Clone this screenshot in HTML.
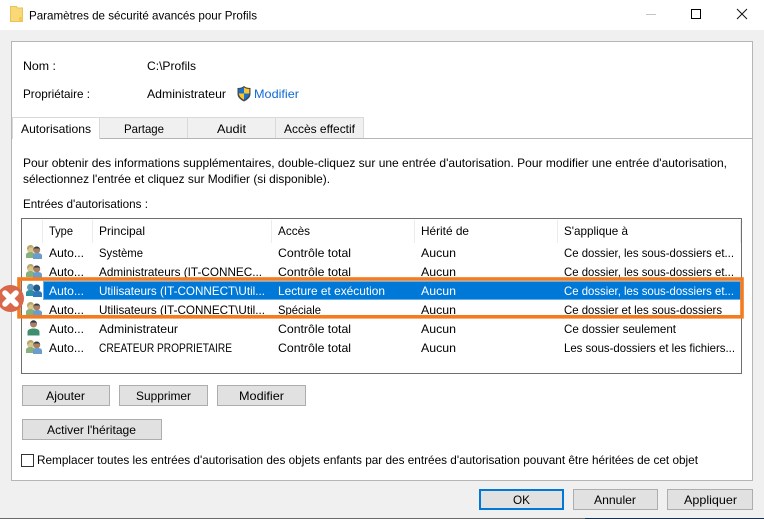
<!DOCTYPE html>
<html lang="fr">
<head>
<meta charset="utf-8">
<title>Paramètres de sécurité avancés pour Profils</title>
<style>
html,body{margin:0;padding:0;background:#f0f0f0;width:764px;height:519px;overflow:hidden}
svg{display:block;position:absolute;left:0;top:0}
text{font-family:"Liberation Sans",sans-serif;font-size:12px;fill:#000;white-space:pre}
.w{fill:#fff}
.l{fill:#0f6bd4}
.b{fill:#e1e1e1;stroke:#adadad;stroke-width:1}
.s{stroke:#ececec;stroke-width:1;fill:none}
</style>
</head>
<body>
<svg width="764" height="519" viewBox="0 0 764 519" xmlns="http://www.w3.org/2000/svg">
<defs>
<g id="grp">
  <circle cx="4.500" cy="4.300" r="3.500" fill="#d9c48c"/>
  <path d="M1 4a3.500 3.500 0 0 1 7 -1l-1.500 -.5h-3l-1 2z" fill="#b9a768"/>
  <path d="M0 13v-3c0-2 2-3 4.500-3s4.500 1 4.500 3v3z" fill="#88b07c"/>
  <circle cx="10.700" cy="5" r="3.500" fill="#a98060"/>
  <path d="M7.200 5a3.500 3.500 0 0 1 7 0l-1-1.500h-5z" fill="#2f3a48"/>
  <path d="M7 14v-3c0-2 1.500-3 4.500-3s4.500 1 4.500 3v3z" fill="#6a9ccc"/>
</g>
<g id="grps">
  <circle cx="4.500" cy="4.300" r="3.500" fill="#5b9bb8"/>
  <path d="M0 13v-3c0-2 2-3 4.500-3s4.500 1 4.500 3v3z" fill="#2f8fa0"/>
  <circle cx="10.700" cy="5" r="3.500" fill="#23588c"/>
  <path d="M7 14v-3c0-2 1.500-3 4.500-3s4.500 1 4.500 3v3z" fill="#2f78c0"/>
</g>
<g id="usr">
  <circle cx="6.500" cy="4" r="3.500" fill="#a98060"/>
  <path d="M3 3.800a3.500 3.500 0 0 1 7 0l-1-1.200h-5z" fill="#2f3a48"/>
  <path d="M0.500 15.500v-3.500c0-2.500 2.500-3.500 6-3.500s6 1 6 3.500v3.500z" fill="#3f8f6e"/>
</g>
</defs>

<!-- title bar -->
<rect x="0" y="0" width="764" height="30" fill="#fff"/>
<path d="M10.500 6.500h6l1 1.500h5v13.500h-12z" fill="#f8d976" stroke="#e8c35c"/>
<rect x="19" y="17" width="4" height="4" fill="#f3c94f"/>
<text x="29" y="19.500" textLength="228" lengthAdjust="spacingAndGlyphs">Paramètres de sécurité avancés pour Profils</text>
<rect x="646" y="14" width="10" height="1" fill="#c4c4c4"/>
<rect x="691.500" y="9.500" width="9" height="9" fill="none" stroke="#000"/>
<path d="M737 9l10 10M747 9l-10 10" stroke="#111" stroke-width="1" fill="none"/>

<!-- main panel -->
<rect x="11.500" y="41.500" width="741" height="439" fill="#fff" stroke="#b5b5b5"/>

<text x="23" y="70" textLength="33" lengthAdjust="spacingAndGlyphs">Nom :</text>
<text x="147" y="70" textLength="49" lengthAdjust="spacingAndGlyphs">C:\Profils</text>
<text x="23" y="98" textLength="67" lengthAdjust="spacingAndGlyphs">Propriétaire :</text>
<text x="147" y="98" textLength="79" lengthAdjust="spacingAndGlyphs">Administrateur</text>
<!-- shield -->
<path d="M244 86c2 1.500 4 2 6.500 2v6c0 3.500-3 5.800-6.500 7.500c-3.500-1.700-6.500-4-6.500-7.500v-6c2.500 0 4.500-.5 6.500-2z" fill="#44494f"/>
<path d="M244 87.500v6h-5.300v-4.500c2 0 3.700-.5 5.300-1.500z" fill="#1c6fc9"/>
<path d="M244 87.500c1.600 1 3.300 1.500 5.300 1.500v4.500h-5.300z" fill="#f7c52e"/>
<path d="M238.800 93.500h5.200v6.300c-2.500-1.300-4.800-3.200-5.200-6.300z" fill="#f7c52e"/>
<path d="M244 93.500h5.200c-.4 3.100-2.700 5-5.200 6.300z" fill="#1c6fc9"/>
<text class="l" x="254" y="98" textLength="45" lengthAdjust="spacingAndGlyphs">Modifier</text>

<!-- tabs -->
<rect x="99.500" y="117.500" width="88" height="21" fill="#f0f0f0" stroke="#d9d9d9"/>
<rect x="187.500" y="117.500" width="88" height="21" fill="#f0f0f0" stroke="#d9d9d9"/>
<rect x="275.500" y="117.500" width="88" height="21" fill="#f0f0f0" stroke="#d9d9d9"/>
<path d="M99 138.500H753" stroke="#b5b5b5" fill="none"/>
<path d="M12.500 139V117.500H99.500V139" fill="#fff" stroke="#d9d9d9"/>
<text x="21" y="133" textLength="70" lengthAdjust="spacingAndGlyphs">Autorisations</text>
<text x="124" y="133" textLength="40" lengthAdjust="spacingAndGlyphs">Partage</text>
<text x="217" y="133" textLength="29" lengthAdjust="spacingAndGlyphs">Audit</text>
<text x="284" y="133" textLength="71" lengthAdjust="spacingAndGlyphs">Accès effectif</text>

<!-- description -->
<text x="23" y="167" textLength="704" lengthAdjust="spacingAndGlyphs">Pour obtenir des informations supplémentaires, double-cliquez sur une entrée d'autorisation. Pour modifier une entrée d'autorisation,</text>
<text x="23" y="183" textLength="307" lengthAdjust="spacingAndGlyphs">sélectionnez l'entrée et cliquez sur Modifier (si disponible).</text>
<text x="23" y="208" textLength="125" lengthAdjust="spacingAndGlyphs">Entrées d'autorisations :</text>

<!-- list -->
<rect x="21.500" y="218.500" width="720" height="155" fill="#fff" stroke="#6e6e6e"/>
<path class="s" d="M42.500 220V243M92.500 220V243M271.500 220V243M414.500 220V243M557.500 220V243M740.500 220V243"/>
<text x="49" y="235" textLength="24" lengthAdjust="spacingAndGlyphs">Type</text>
<text x="99" y="235" textLength="46" lengthAdjust="spacingAndGlyphs">Principal</text>
<text x="278" y="235" textLength="32" lengthAdjust="spacingAndGlyphs">Accès</text>
<text x="421" y="235" textLength="48" lengthAdjust="spacingAndGlyphs">Hérité de</text>
<text x="564" y="235" textLength="64" lengthAdjust="spacingAndGlyphs">S'applique à</text>

<!-- selection -->
<rect x="43" y="281" width="698" height="19" fill="#0078d7"/>
<rect x="43.500" y="281.500" width="697" height="18" fill="none" stroke="#cfe4f7" stroke-dasharray="1 1"/>

<!-- icons -->
<use href="#grp" x="26" y="245"/>
<use href="#grp" x="26" y="264"/>
<use href="#grps" x="26" y="283"/>
<use href="#grp" x="26" y="302"/>
<use href="#usr" x="27" y="320"/>
<use href="#grp" x="26" y="340"/>

<!-- row 1 -->
<text x="49" y="257" textLength="35" lengthAdjust="spacingAndGlyphs">Auto...</text>
<text x="99" y="257" textLength="44" lengthAdjust="spacingAndGlyphs">Système</text>
<text x="278" y="257" textLength="73" lengthAdjust="spacingAndGlyphs">Contrôle total</text>
<text x="421" y="257" textLength="35" lengthAdjust="spacingAndGlyphs">Aucun</text>
<text x="564" y="257" textLength="170" lengthAdjust="spacingAndGlyphs">Ce dossier, les sous-dossiers et...</text>
<!-- row 2 -->
<text x="49" y="276" textLength="35" lengthAdjust="spacingAndGlyphs">Auto...</text>
<text x="99" y="276" textLength="163" lengthAdjust="spacingAndGlyphs">Administrateurs (IT-CONNEC...</text>
<text x="278" y="276" textLength="73" lengthAdjust="spacingAndGlyphs">Contrôle total</text>
<text x="421" y="276" textLength="35" lengthAdjust="spacingAndGlyphs">Aucun</text>
<text x="564" y="276" textLength="170" lengthAdjust="spacingAndGlyphs">Ce dossier, les sous-dossiers et...</text>
<!-- row 3 -->
<text class="w" x="49" y="295" textLength="35" lengthAdjust="spacingAndGlyphs">Auto...</text>
<text class="w" x="99" y="295" textLength="166" lengthAdjust="spacingAndGlyphs">Utilisateurs (IT-CONNECT\Util...</text>
<text class="w" x="278" y="295" textLength="107" lengthAdjust="spacingAndGlyphs">Lecture et exécution</text>
<text class="w" x="421" y="295" textLength="35" lengthAdjust="spacingAndGlyphs">Aucun</text>
<text class="w" x="564" y="295" textLength="170" lengthAdjust="spacingAndGlyphs">Ce dossier, les sous-dossiers et...</text>
<!-- row 4 -->
<text x="49" y="314" textLength="35" lengthAdjust="spacingAndGlyphs">Auto...</text>
<text x="99" y="314" textLength="166" lengthAdjust="spacingAndGlyphs">Utilisateurs (IT-CONNECT\Util...</text>
<text x="278" y="314" textLength="43" lengthAdjust="spacingAndGlyphs">Spéciale</text>
<text x="421" y="314" textLength="35" lengthAdjust="spacingAndGlyphs">Aucun</text>
<text x="564" y="314" textLength="158" lengthAdjust="spacingAndGlyphs">Ce dossier et les sous-dossiers</text>
<!-- row 5 -->
<text x="49" y="333" textLength="35" lengthAdjust="spacingAndGlyphs">Auto...</text>
<text x="99" y="333" textLength="79" lengthAdjust="spacingAndGlyphs">Administrateur</text>
<text x="278" y="333" textLength="73" lengthAdjust="spacingAndGlyphs">Contrôle total</text>
<text x="421" y="333" textLength="35" lengthAdjust="spacingAndGlyphs">Aucun</text>
<text x="564" y="333" textLength="112" lengthAdjust="spacingAndGlyphs">Ce dossier seulement</text>
<!-- row 6 -->
<text x="49" y="352" textLength="35" lengthAdjust="spacingAndGlyphs">Auto...</text>
<text x="99" y="352" textLength="133" lengthAdjust="spacingAndGlyphs">CREATEUR PROPRIETAIRE</text>
<text x="278" y="352" textLength="73" lengthAdjust="spacingAndGlyphs">Contrôle total</text>
<text x="421" y="352" textLength="35" lengthAdjust="spacingAndGlyphs">Aucun</text>
<text x="564" y="352" textLength="171" lengthAdjust="spacingAndGlyphs">Les sous-dossiers et les fichiers...</text>

<!-- orange highlight -->
<rect x="19" y="279" width="723" height="37.800" fill="none" stroke="#f47b20" stroke-width="3.600"/>
<!-- red X -->
<circle cx="10.500" cy="298.500" r="13.500" fill="#d9674a"/>
<path d="M5 293L16 304M16 293L5 304" stroke="#fff" stroke-width="5.500" stroke-linecap="round" fill="none"/>

<!-- action buttons -->
<rect class="b" x="22.500" y="385.500" width="87" height="20"/>
<rect class="b" x="119.500" y="385.500" width="88" height="20"/>
<rect class="b" x="217.500" y="385.500" width="88" height="20"/>
<rect class="b" x="22.500" y="419.500" width="139" height="20"/>
<text x="46" y="400" textLength="39" lengthAdjust="spacingAndGlyphs">Ajouter</text>
<text x="136" y="400" textLength="55" lengthAdjust="spacingAndGlyphs">Supprimer</text>
<text x="239" y="400" textLength="45" lengthAdjust="spacingAndGlyphs">Modifier</text>
<text x="47" y="434" textLength="89" lengthAdjust="spacingAndGlyphs">Activer l'héritage</text>

<!-- checkbox -->
<rect x="21.500" y="454.500" width="12" height="12" fill="#fff" stroke="#333"/>
<text x="37" y="464" textLength="661" lengthAdjust="spacingAndGlyphs">Remplacer toutes les entrées d'autorisation des objets enfants par des entrées d'autorisation pouvant être héritées de cet objet</text>

<!-- dialog buttons -->
<rect x="480" y="490" width="83" height="19" fill="#e1e1e1" stroke="#0078d7" stroke-width="2"/>
<rect class="b" x="573.500" y="489.500" width="84" height="20"/>
<rect class="b" x="667.500" y="489.500" width="85" height="20"/>
<text x="513" y="504" textLength="17" lengthAdjust="spacingAndGlyphs">OK</text>
<text x="594" y="504" textLength="42" lengthAdjust="spacingAndGlyphs">Annuler</text>
<text x="684" y="504" textLength="53" lengthAdjust="spacingAndGlyphs">Appliquer</text>

<!-- bottom edge -->
<rect x="0" y="518" width="585" height="1" fill="#6a6a6a"/>
<rect x="585" y="518" width="179" height="1" fill="#16324f"/>
</svg>
</body>
</html>
